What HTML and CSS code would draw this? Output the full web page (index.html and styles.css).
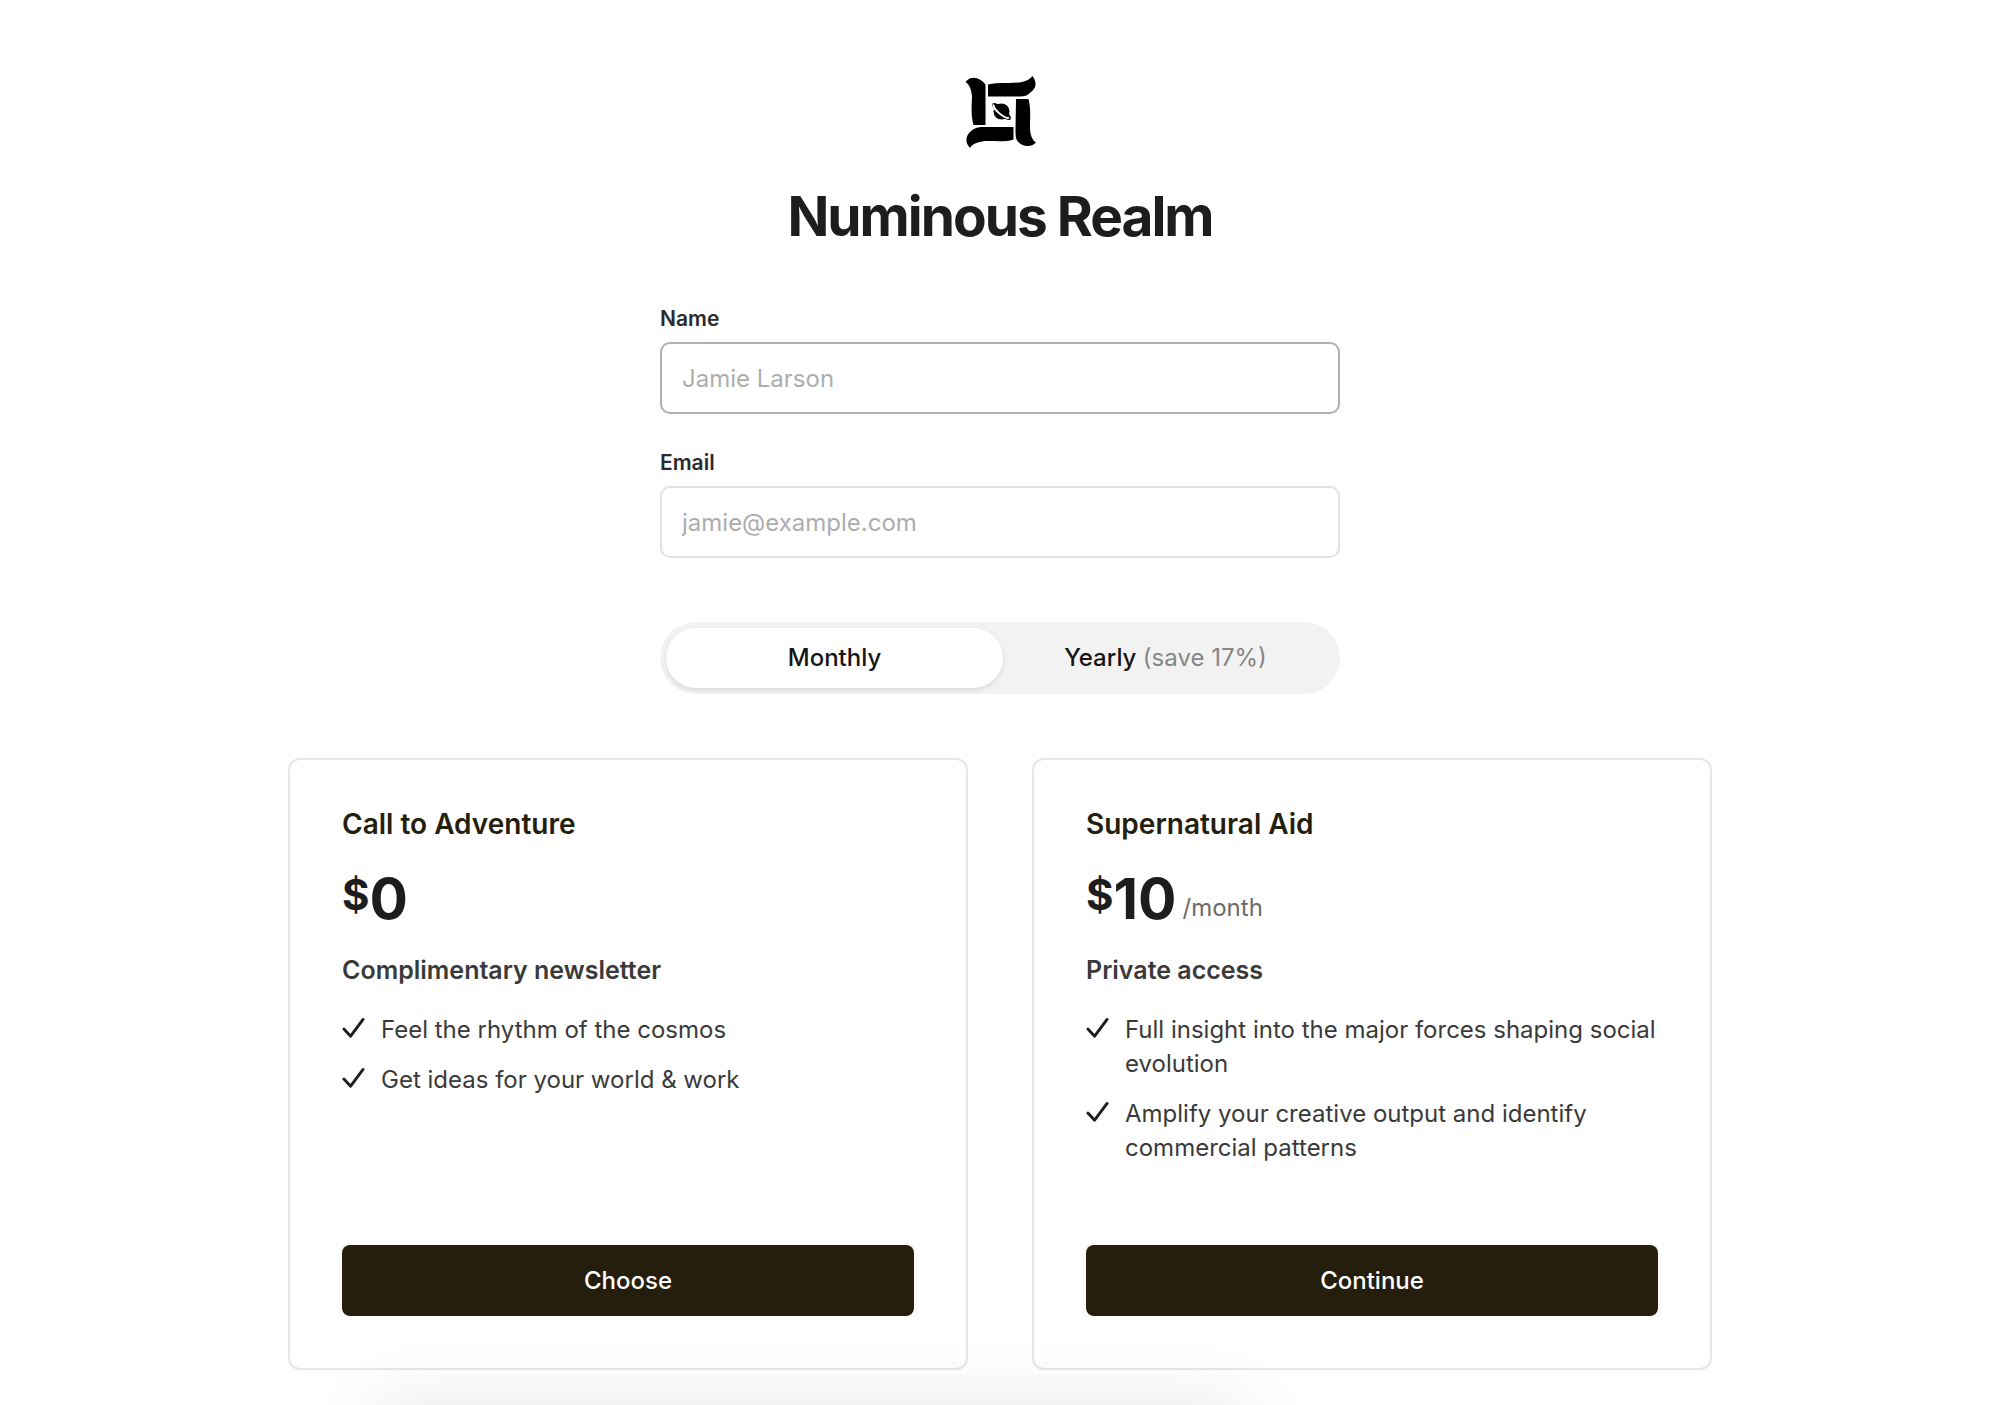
FILE: index.html
```html
<!DOCTYPE html>
<html lang="en">
<head>
<meta charset="utf-8">
<meta name="viewport" content="width=device-width, initial-scale=1">
<title>Numinous Realm</title>
<link rel="stylesheet" href="styles.css">
</head>
<body>
<svg class="sprite" aria-hidden="true">
  <symbol id="check" viewBox="0 0 24 24"><path d="M2 12.500L9 20L22 2.500" fill="none" stroke="currentColor" stroke-width="3" stroke-linecap="round" stroke-linejoin="round"/></symbol>
</svg>
<main class="page">
  <header class="brand">
    <svg class="logo" viewBox="0 0 100 100" role="img" aria-label="Numinous Realm logo">
      <path d="M15.500 22C20 16 29 16 35.500 24.500V65H23.500C21 56 21.500 46 22 38C22 30 19 24 15.500 22Z"/>
      <path d="M38 24.500C48 21.500 64 24 72 22C77 21 80 19 82.500 16C87 22 86.500 28 81 32C78 35 75 36.500 70 36.500H38Z"/>
      <path d="M66 39H78.500C81 48 80 59 80 67C80 75 82 80 86 82.500C81 88 72 87 67 80.500C65.500 78 65.500 74 65.500 70Z"/>
      <path d="M63.500 67V79.500C53 83 41 80 32 81.500C26 82.500 22.500 84 20 88C14.500 82 16 76 20 72C24 68 28 67 33 67Z"/>
      <circle cx="51.500" cy="51.500" r="8"/>
      <ellipse cx="51.500" cy="51.500" rx="12" ry="4" transform="rotate(42 51.500 51.500)"/>
      <path d="M43.500 44.500C43 48 48 53 53 56C56 58 58 58.500 59 57.500" fill="none" stroke="#fff" stroke-width="2"/>
    </svg>
    <h1 class="title">Numinous Realm</h1>
  </header>
  <form class="signup">
    <div class="details">
      <div class="field">
        <label for="name">Name</label>
        <input class="active" id="name" type="text" placeholder="Jamie Larson">
      </div>
      <div class="field">
        <label for="email">Email</label>
        <input id="email" type="email" placeholder="jamie@example.com">
      </div>
      <div class="period">
        <button class="option selected" type="button" aria-pressed="true">Monthly</button>
        <button class="option" type="button" aria-pressed="false">Yearly <span class="saving">(save 17%)</span></button>
      </div>
    </div>
    <div class="plans">
      <section class="plan">
        <h2>Call to Adventure</h2>
        <p class="price"><span class="currency">$</span><span>0</span></p>
        <h3>Complimentary newsletter</h3>
        <ul>
          <li><svg class="check" aria-hidden="true"><use href="#check"/></svg><span>Feel the rhythm of the cosmos</span></li>
          <li><svg class="check" aria-hidden="true"><use href="#check"/></svg><span>Get ideas for your world &amp; work</span></li>
        </ul>
        <button class="choose" type="button">Choose</button>
      </section>
      <section class="plan">
        <h2>Supernatural Aid</h2>
        <p class="price"><span class="currency">$</span><span>10</span><span class="per">/month</span></p>
        <h3>Private access</h3>
        <ul>
          <li><svg class="check" aria-hidden="true"><use href="#check"/></svg><span>Full insight into the major forces shaping social evolution</span></li>
          <li><svg class="check" aria-hidden="true"><use href="#check"/></svg><span>Amplify your creative output and identify commercial patterns</span></li>
        </ul>
        <button class="choose" type="button">Continue</button>
      </section>
    </div>
  </form>
</main>
<div class="tray"></div>
</body>
</html>
```
FILE: styles.css
```css
* { box-sizing: border-box; }

body {
  margin: 0;
  background: #fff;
  color: #1d1d1d;
  font: 24px/34px Inter, "Liberation Sans", sans-serif;
}

h1, h2, h3, p, ul { margin: 0; padding: 0; }
button, input { font: inherit; }
.sprite { display: none; }

.page {
  max-width: 1488px;
  margin: 0 auto;
  padding: 60px 32px 34px;
}

.brand {
  display: flex;
  flex-direction: column;
  align-items: center;
  gap: 22px;
}

.logo { width: 100px; height: 100px; fill: #000; }

.title {
  font-size: 55px;
  line-height: 68px;
  font-weight: 700;
  letter-spacing: -2px;
}

.signup { margin-top: 52px; }

.details {
  display: flex;
  flex-direction: column;
  gap: 32px;
  max-width: 680px;
  margin: 0 auto;
}

.field { display: flex; flex-direction: column; gap: 6px; }

.field label {
  font-size: 21px;
  line-height: 34px;
  font-weight: 600;
  color: #2b2b2b;
}

.field input {
  width: 100%;
  height: 72px;
  padding: 0 20px;
  border: 2px solid #e1e1e1;
  border-radius: 10px;
  background: #fff;
  outline: none;
}

.field input.active { border-color: #b0b0b0; }
.field input::placeholder { color: #adadad; opacity: 1; }

.period {
  display: flex;
  height: 72px;
  margin-top: 32px;
  padding: 6px;
  border-radius: 36px;
  background: #f2f2f2;
}

.option {
  flex: 1;
  border: 0;
  border-radius: 30px;
  background: transparent;
  color: #151515;
  font-weight: 500;
}

.option.selected {
  margin-right: -6px;
  background: #fff;
  box-shadow: 0 2px 5px rgba(0, 0, 0, 0.1);
}

.saving { color: #868686; font-weight: 400; }

.plans {
  display: grid;
  grid-template-columns: repeat(auto-fit, minmax(min(100%, 480px), 1fr));
  gap: 64px;
  margin-top: 64px;
}

.plan {
  display: flex;
  flex-direction: column;
  min-height: 612px;
  padding: 44px 52px 52px;
  border: 2px solid #e6e6e6;
  border-radius: 12px;
}

.plan h2 {
  color: #261e0c;
  font-size: 28px;
  line-height: 40px;
  font-weight: 600;
}

.price {
  display: flex;
  align-items: flex-start;
  margin-top: 20px;
  font-size: 57px;
  line-height: 70px;
  font-weight: 700;
}

.currency { font-size: 42px; line-height: 62px; }

.per {
  align-self: flex-end;
  margin-left: 6px;
  color: #6b6b6b;
  font-size: 24px;
  line-height: 52px;
  font-weight: 400;
}

.plan h3 {
  margin-top: 19px;
  color: #3a3a3a;
  font-size: 25px;
  line-height: 34px;
  font-weight: 600;
}

.plan ul {
  display: flex;
  flex-direction: column;
  gap: 16px;
  margin: 26px 0 32px;
  list-style: none;
  color: #3a3a3a;
}

.plan li { display: flex; gap: 16px; }
.check { flex: none; width: 23px; height: 23px; margin-top: 4px; color: #1d1d1d; }

.choose {
  width: 100%;
  height: 71px;
  margin-top: auto;
  border: 0;
  border-radius: 8px;
  background: #261e0c;
  color: #fff;
  font-weight: 500;
}

/* Floating tray resting just below the fold; only its shadow shows. */
.tray {
  position: fixed;
  right: 38%;
  bottom: -70px;
  left: 19%;
  height: 60px;
  box-shadow: 0 0 80px rgba(0, 0, 0, 0.14);
  pointer-events: none;
}
```
